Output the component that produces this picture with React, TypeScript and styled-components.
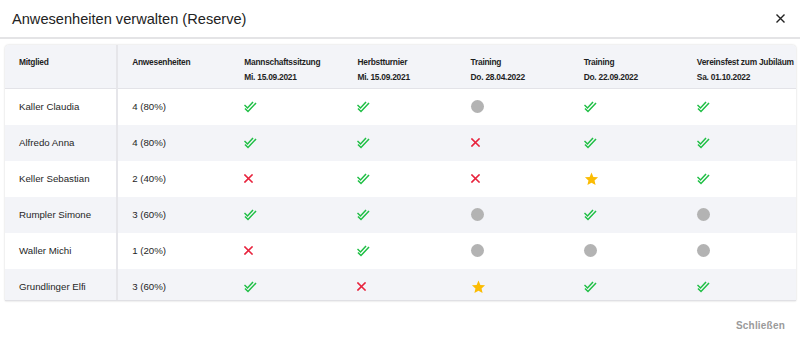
import React from "react";
import styled, { createGlobalStyle } from "styled-components";

type Status = "yes" | "no" | "open" | "star";

interface Member {
    name: string;
    total: string;
    states: Status[];
}

const GlobalStyle = createGlobalStyle`
    html, body {
        margin: 0;
        padding: 0;
        background: #ffffff;
    }
    body {
        font-family: "Liberation Sans", Arial, sans-serif;
        color: #1f1f1f;
    }
`

const Modal = styled.div`
    width: 800px;
    height: 345px;
    display: flex;
    flex-direction: column;
    background: #ffffff;
`

const ModalHeader = styled.div`
    display: flex;
    justify-content: space-between;
    align-items: center;
    height: 39px;
    padding: 0 13px 0 12px;
    border-bottom: 2px solid #e4e4e6;
    box-sizing: border-box;
`

const Title = styled.h2`
    margin: 0;
    font-size: 14.6px;
    font-weight: normal;
    color: #222222;
`

const CloseButton = styled.button`
    border: none;
    background: none;
    padding: 0;
    width: 14px;
    height: 14px;
    display: flex;
    align-items: center;
    justify-content: center;
    cursor: pointer;
`

const Body = styled.div`
    padding: 6px 4px 0 5px;
`

/* Scrollbereich: die letzte Zeile wird unten abgeschnitten */
const TableWrap = styled.div`
    height: 256px;
    border-radius: 4px 4px 0 0;
    box-shadow: 0 0 2px rgba(0, 0, 0, 0.22);
    overflow: hidden;
    border-bottom: 1px solid #e0e0e4;
    box-sizing: border-box;
`

const Table = styled.table`
    width: 100%;
    border-collapse: collapse;
    table-layout: fixed;
`

const HeadCell = styled.th<{ $first?: boolean }>`
    text-align: left;
    font-weight: bold;
    font-size: 8.4px;
    letter-spacing: -0.25px;
    line-height: 15px;
    color: #1f1f1f;
    white-space: nowrap;
    background: #f3f4f8;
    height: 43px;
    box-sizing: border-box;
    padding: 10px 0 0 14px;
    vertical-align: top;
    border-bottom: 1px solid #e3e3e8;
    border-right: ${(p) => (p.$first ? "2px solid #e6e6ea" : "none")};
`

const Row = styled.tr<{ $striped: boolean }>`
    background: ${(p) => (p.$striped ? "#f3f4f8" : "#ffffff")};
`

const Cell = styled.td<{ $first?: boolean }>`
    height: 36px;
    padding: 0 0 0 14px;
    vertical-align: middle;
    font-size: 9.7px;
    color: #1f1f1f;
    white-space: nowrap;
    border-right: ${(p) => (p.$first ? "2px solid #e6e6ea" : "none")};
`

const IconBox = styled.span`
    display: inline-flex;
    align-items: center;
    height: 14px;
    vertical-align: middle;
`

const Dot = styled.span`
    display: inline-block;
    width: 13px;
    height: 13px;
    border-radius: 50%;
    background: #b3b3b3;
`

const Footer = styled.div`
    flex: 1;
    display: flex;
    justify-content: flex-end;
    align-items: center;
    padding: 0 15px 0 0;
`

const FooterButton = styled.button`
    border: none;
    background: none;
    font-family: "Liberation Sans", Arial, sans-serif;
    font-weight: bold;
    font-size: 10px;
    color: #9a9a9a;
    letter-spacing: 0.2px;
    padding: 0;
    margin-top: 4px;
`

const columns = [
    { title: "Mannschaftssitzung", date: "Mi. 15.09.2021" },
    { title: "Herbstturnier", date: "Mi. 15.09.2021" },
    { title: "Training", date: "Do. 28.04.2022" },
    { title: "Training", date: "Do. 22.09.2022" },
    { title: "Vereinsfest zum Jubiläum", date: "Sa. 01.10.2022" },
];

const members: Member[] = [
    { name: "Kaller Claudia", total: "4 (80%)", states: ["yes", "yes", "open", "yes", "yes"] },
    { name: "Alfredo Anna", total: "4 (80%)", states: ["yes", "yes", "no", "yes", "yes"] },
    { name: "Keller Sebastian", total: "2 (40%)", states: ["no", "yes", "no", "star", "yes"] },
    { name: "Rumpler Simone", total: "3 (60%)", states: ["yes", "yes", "open", "yes", "open"] },
    { name: "Waller Michi", total: "1 (20%)", states: ["no", "yes", "open", "open", "open"] },
    { name: "Grundlinger Elfi", total: "3 (60%)", states: ["yes", "no", "star", "yes", "yes"] },
];

function StatusIcon({ status }: { status: Status }) {
    if (status === "open") return <IconBox><Dot /></IconBox>;

    if (status === "yes") {
        return (
            <IconBox>
                <svg width="13" height="12" viewBox="0 0 13 12" fill="none" stroke="#1fbf45" strokeWidth="1.5" strokeLinecap="square">
                    <path d="M1 4.5 L3.5 7 L8.5 1.5" />
                    <path d="M1.5 8 L4 10.5 L11.5 2.5" />
                </svg>
            </IconBox>
        );
    }

    if (status === "no") {
        return (
            <IconBox>
                <svg width="9" height="9" viewBox="0 0 9 9" stroke="#e8233d" strokeWidth="1.6" strokeLinecap="square">
                    <path d="M1 1 L8 8 M8 1 L1 8" />
                </svg>
            </IconBox>
        );
    }

    // besonderer Einsatz
    return (
        <IconBox>
            <svg width="15" height="14" viewBox="0 0 24 23" fill="#fbbc04">
                <path d="M12 1 L15.1 8.1 L22.8 8.8 L17 13.9 L18.7 21.5 L12 17.5 L5.3 21.5 L7 13.9 L1.2 8.8 L8.9 8.1 Z" strokeLinejoin="round" />
            </svg>
        </IconBox>
    );
}

export default function App() {
    return (
        <>
            <GlobalStyle />
            <Modal>
                <ModalHeader>
                    <Title>Anwesenheiten verwalten (Reserve)</Title>
                    <CloseButton aria-label="Schließen">
                        <svg width="9" height="9" viewBox="0 0 9 9" stroke="#222" strokeWidth="1.4">
                            <path d="M0.5 0.5 L8.5 8.5 M8.5 0.5 L0.5 8.5" />
                        </svg>
                    </CloseButton>
                </ModalHeader>

                <Body>
                    <TableWrap>
                        <Table>
                            <colgroup>
                                <col style={{ width: 112 }} />
                                <col style={{ width: 113 }} />
                                {columns.map((_, i) => <col key={i} style={{ width: 113 }} />)}
                            </colgroup>
                            <thead>
                                <tr>
                                    <HeadCell $first>Mitglied</HeadCell>
                                    <HeadCell>Anwesenheiten</HeadCell>
                                    {columns.map((c, i) => (
                                        <HeadCell key={i}>
                                            {c.title}
                                            <br />
                                            {c.date}
                                        </HeadCell>
                                    ))}
                                </tr>
                            </thead>
                            <tbody>
                                {members.map((m, index) => (
                                    <Row key={m.name} $striped={index % 2 === 1}>
                                        <Cell $first>{m.name}</Cell>
                                        <Cell>{m.total}</Cell>
                                        {m.states.map((s, i) => (
                                            <Cell key={i}><StatusIcon status={s} /></Cell>
                                        ))}
                                    </Row>
                                ))}
                            </tbody>
                        </Table>
                    </TableWrap>
                </Body>

                <Footer>
                    <FooterButton>Schließen</FooterButton>
                </Footer>
            </Modal>
        </>
    )
}
